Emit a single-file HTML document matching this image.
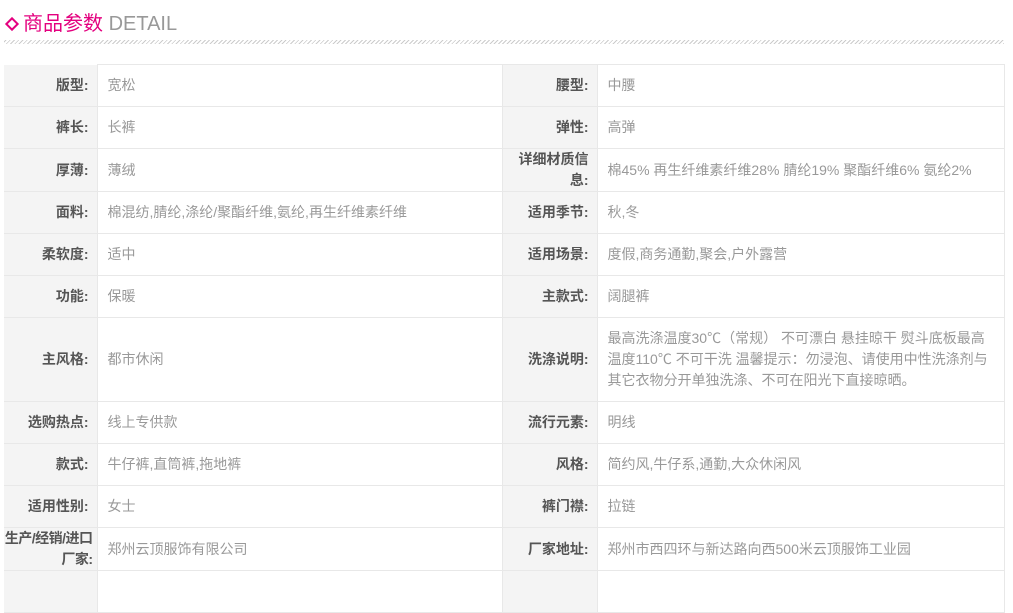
<!DOCTYPE html>
<html><head><meta charset="utf-8"><style>
html,body{margin:0;background:#fff;width:1013px;height:577px;overflow:hidden;font-family:"Liberation Sans","Noto Sans CJK SC",sans-serif;}
.hd{position:absolute;left:4px;top:10px;height:30px;}
.dia{position:absolute;left:3px;top:9px;width:6px;height:6px;border:2.5px solid #e4007f;transform:rotate(45deg);}
.tt{position:absolute;left:19px;top:0;font-size:20px;color:#e4007f;white-space:nowrap;line-height:28px;}
.tt span{color:#999;}
.line{position:absolute;left:4px;top:40px;width:1000px;height:4px;background:repeating-linear-gradient(-45deg,#ccc 0 1px,transparent 1px 3px);}
table{position:absolute;left:4px;top:64px;border-collapse:collapse;table-layout:fixed;width:1000px;}
td{border:1px solid #e8e8e8;font-size:14px;height:42px;padding:0;line-height:21px;box-sizing:border-box;}
td.l{background:#f4f4f4;color:#555;font-weight:bold;text-align:right;padding-right:8px;}
td.v{color:#999;padding-left:10px;padding-right:8px;}
table tr td:first-child{border-left:none;}
table tr:first-child td:first-child{border-top:none}
</style></head><body>
<div class="hd"><div class="dia"></div><div class="tt">商品参数 <span>DETAIL</span></div></div>
<div class="line"></div>
<table>
<tr><td class="l" style="width:93px">版型:</td><td class="v" style="width:405px">宽松</td><td class="l" style="width:95px">腰型:</td><td class="v" style="width:407px">中腰</td></tr>
<tr><td class="l">裤长:</td><td class="v">长裤</td><td class="l">弹性:</td><td class="v">高弹</td></tr>
<tr><td class="l">厚薄:</td><td class="v">薄绒</td><td class="l">详细材质信息:</td><td class="v">棉45% 再生纤维素纤维28% 腈纶19% 聚酯纤维6% 氨纶2%</td></tr>
<tr><td class="l">面料:</td><td class="v">棉混纺,腈纶,涤纶/聚酯纤维,氨纶,再生纤维素纤维</td><td class="l">适用季节:</td><td class="v">秋,冬</td></tr>
<tr><td class="l">柔软度:</td><td class="v">适中</td><td class="l">适用场景:</td><td class="v">度假,商务通勤,聚会,户外露营</td></tr>
<tr><td class="l">功能:</td><td class="v">保暖</td><td class="l">主款式:</td><td class="v">阔腿裤</td></tr>
<tr><td class="l" style="height:84px">主风格:</td><td class="v">都市休闲</td><td class="l">洗涤说明:</td><td class="v">最高洗涤温度30℃（常规） 不可漂白 悬挂晾干 熨斗底板最高温度110℃ 不可干洗 温馨提示：勿浸泡、请使用中性洗涤剂与其它衣物分开单独洗涤、不可在阳光下直接晾晒。</td></tr>
<tr><td class="l">选购热点:</td><td class="v">线上专供款</td><td class="l">流行元素:</td><td class="v">明线</td></tr>
<tr><td class="l">款式:</td><td class="v">牛仔裤,直筒裤,拖地裤</td><td class="l">风格:</td><td class="v">简约风,牛仔系,通勤,大众休闲风</td></tr>
<tr><td class="l">适用性别:</td><td class="v">女士</td><td class="l">裤门襟:</td><td class="v">拉链</td></tr>
<tr><td class="l" style="padding-right:4px;white-space:nowrap;letter-spacing:-0.5px">生产/经销/进口<br>厂家:</td><td class="v">郑州云顶服饰有限公司</td><td class="l">厂家地址:</td><td class="v">郑州市西四环与新达路向西500米云顶服饰工业园</td></tr>
<tr><td class="l"></td><td class="v"></td><td class="l"></td><td class="v"></td></tr>
</table>
</body></html>
